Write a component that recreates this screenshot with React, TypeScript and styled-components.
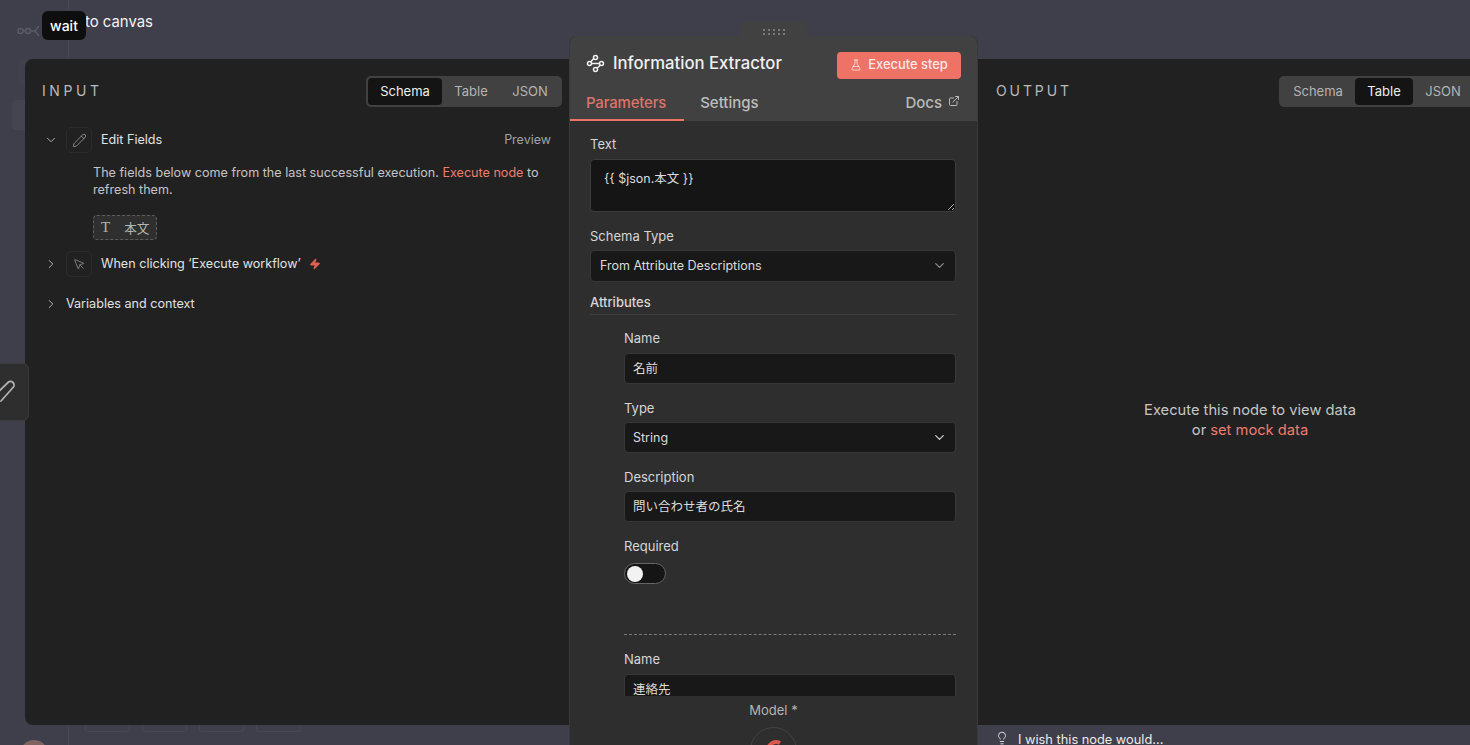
import React from 'react'
import styled, { createGlobalStyle } from 'styled-components'
import {
  ChevronDown,
  ChevronRight,
  ExternalLink,
  FlaskConical,
  Lightbulb,
  MousePointer,
  Pencil,
  Zap,
} from 'lucide-react'

const GlobalStyle = createGlobalStyle`
  html, body {
    margin: 0;
    height: 100%;
    background: #3f3e4b;
  }
  body {
    font-family: Inter, "Noto Sans CJK JP", sans-serif;
    overflow: hidden;
  }
  * {
    box-sizing: border-box;
  }
`

// The whole window: rows follow the handle, the panel tops and the bottom strip
const Stage = styled.div`
  position: relative;
  width: 1470px;
  height: 745px;
  overflow: hidden;
  display: grid;
  grid-template-columns: 25px 544px 409px 544px;
  grid-template-rows: 21px 15px 23px 666px 20px;
`

const BackLink = styled.div`
  grid-column: 1 / 3;
  grid-row: 1 / 4;
  padding: 13px 0 0 46px;
  font-size: 14.9px;
  line-height: 18px;
  font-weight: 400;
  color: #f4f4f4;
`

const BackgroundRail = styled.div`
  position: absolute;
  left: 68px;
  top: 0;
  bottom: 0;
  width: 1px;
  background: #474654;
`

const GhostNode = styled.svg`
  position: absolute;
  left: 16px;
  top: 23px;
`

const GhostSlot = styled.div<{ $top: number; $left: number; $height: number; $tone: string }>`
  position: absolute;
  left: ${p => p.$left}px;
  top: ${p => p.$top}px;
  width: 30px;
  height: ${p => p.$height}px;
  border-radius: 4px;
  background: ${p => p.$tone};
`

const Tooltip = styled.div`
  position: absolute;
  left: 42px;
  top: 11px;
  width: 44px;
  height: 29px;
  z-index: 5;
  border-radius: 6px;
  background: #0e0e0e;
  color: #ffffff;
  font-size: 14px;
  font-weight: 500;
  line-height: 29px;
  text-align: center;
`

const SidePanel = styled.section<{ $side: 'left' | 'right' }>`
  position: relative;
  z-index: 1;
  grid-row: 4;
  grid-column: ${p => (p.$side === 'left' ? 2 : 4)};
  background: #212121;
  border-radius: ${p => (p.$side === 'left' ? '8px 0 0 8px' : '0')};
  display: flex;
  flex-direction: column;
  min-width: 0;
  overflow: hidden;
`

const PanelHead = styled.header<{ $side: 'left' | 'right' }>`
  height: 48px;
  flex: none;
  display: flex;
  align-items: center;
  justify-content: space-between;
  padding: ${p => (p.$side === 'left' ? '16px 7px 0 17px' : '16px 47px 0 18px')};
`

const PanelTitle = styled.h2<{ $spacing: number }>`
  margin: 0;
  font-size: 14px;
  line-height: 20px;
  font-weight: 400;
  letter-spacing: ${p => p.$spacing}px;
  color: #b9b9b9;
`

const SegmentGroup = styled.div`
  display: flex;
  height: 31px;
  padding: 2px;
  border-radius: 5px;
  background: #414141;
  flex: none;
`

const Segment = styled.div<{ $active?: boolean; $width: number }>`
  width: ${p => p.$width}px;
  border-radius: 4px;
  background: ${p => (p.$active ? '#141414' : 'transparent')};
  color: ${p => (p.$active ? '#ededed' : '#b4b4b4')};
  font-size: 13px;
  line-height: 27px;
  text-align: center;
`

const InputBody = styled.div`
  padding: 20px 18px 0 17px;
  display: flex;
  flex-direction: column;
`

const TreeRow = styled.div<{ $marginTop?: number }>`
  display: flex;
  align-items: center;
  height: 26px;
  margin-top: ${p => p.$marginTop ?? 0}px;
  color: #e2e2e2;
  font-size: 12.6px;
  line-height: 18px;
`

const Caret = styled.span`
  width: 24px;
  flex: none;
  display: flex;
  padding-left: 2px;
  color: #c4c4c4;
`

const NodeBadge = styled.span`
  width: 26px;
  height: 26px;
  flex: none;
  display: flex;
  align-items: center;
  justify-content: center;
  margin-right: 9px;
  border: 1px solid #2b2b2b;
  border-radius: 5px;
  color: #a8a8a8;
`

const RowLabel = styled.span`
  flex: 1;
  display: flex;
  align-items: center;
  gap: 8px;
`

const PreviewLabel = styled.span`
  color: #a2a2a2;
  font-size: 12.5px;
`

const Notice = styled.p`
  margin: 11px 0 0 51px;
  font-size: 12.6px;
  line-height: 17px;
  color: #c4c4c4;
`

const Accent = styled.span`
  color: #ee7c70;
`

const FieldChip = styled.div`
  width: 64px;
  height: 25px;
  margin: 17px 0 0 51px;
  display: flex;
  align-items: center;
  gap: 14px;
  padding: 0 0 1px 7px;
  border: 1px dashed #5c5c5c;
  border-radius: 4px;
  background: #2f2f2f;
  color: #b4b4b4;
  font-size: 12.6px;
`

const TypeGlyph = styled.span`
  font-family: "Liberation Serif", serif;
  font-size: 15px;
  line-height: 1;
`

const CenterColumn = styled.div`
  grid-column: 3;
  grid-row: 1 / 6;
  z-index: 2;
  display: flex;
  flex-direction: column;
  min-height: 0;
`

const DragHandle = styled.div`
  flex: none;
  align-self: center;
  width: 67px;
  height: 21px;
  margin-top: 21px;
  margin-bottom: -6px;
  border-radius: 6px 6px 0 0;
  background: #414141;
  display: grid;
  grid-template-columns: repeat(5, 2px);
  grid-auto-rows: 2px;
  justify-content: center;
  align-content: start;
  gap: 2px 3px;
  padding-top: 8px;
`

const DragDot = styled.i`
  background: #8e8e8e;
  border-radius: 50%;
`

const CenterPanel = styled.section`
  flex: 1;
  min-height: 0;
  position: relative;
  display: flex;
  flex-direction: column;
  overflow: hidden;
  border-radius: 8px 8px 0 0;
  border-left: 1px solid #3a3a3a;
  border-right: 1px solid #3a3a3a;
  background: #2e2e2e;
`

const CenterHead = styled.header`
  flex: none;
  height: 85px;
  background: #414141;
  display: flex;
  flex-direction: column;
`

const TitleRow = styled.div`
  height: 56px;
  display: flex;
  align-items: center;
  padding: 0 16px 2px 16px;
`

const NodeTitle = styled.h1`
  flex: 1;
  margin: 0 0 0 8px;
  font-size: 16.7px;
  line-height: 24px;
  font-weight: 500;
  color: #f0f0f0;
`

const ExecuteButton = styled.button`
  width: 124px;
  height: 27px;
  margin-top: 5px;
  padding: 0 0 2px;
  border: 0;
  border-radius: 4px;
  background: #ee7265;
  color: #f9e9e6;
  font: 500 12.9px Inter, sans-serif;
  display: flex;
  align-items: center;
  justify-content: center;
  gap: 6px;
`

const TabRow = styled.nav`
  flex: 1;
  display: flex;
  align-items: stretch;
  padding-right: 17px;
`

const Tab = styled.div<{ $active?: boolean }>`
  padding: 0 ${p => (p.$active ? 18 : 16)}px 0 16px;
  font-size: 15px;
  font-weight: 500;
  line-height: 22px;
  letter-spacing: ${p => (p.$active ? '-0.2px' : '0')};
  color: ${p => (p.$active ? '#dd7469' : '#bdbdbd')};
  border-bottom: 2px solid ${p => (p.$active ? '#ee7265' : 'transparent')};
`

const DocsLink = styled.div`
  margin-left: auto;
  display: flex;
  gap: 6px;
  font-size: 15px;
  line-height: 22px;
  font-weight: 500;
  color: #b9b9b9;
`

const DocsIcon = styled.span`
  display: flex;
  margin-top: 3px;
`

const CenterBody = styled.div`
  flex: 1;
  min-height: 0;
  overflow: hidden;
  padding: 14px 21px 0 20px;
`

const FieldLabel = styled.label<{ $top?: number }>`
  display: block;
  margin-top: ${p => p.$top ?? 0}px;
  margin-bottom: ${p => (p.$top ? 4 : 5)}px;
  font-size: 13px;
  line-height: 19px;
  color: #d6d6d6;
`

const TextArea = styled.textarea`
  display: block;
  width: 100%;
  height: 53px;
  padding: 10px 13px;
  border: 1px solid #3c3c3c;
  border-radius: 4px;
  outline: none;
  resize: vertical;
  background: #151515;
  color: #dcdcdc;
  font: 12.5px/17px Inter, "Noto Sans CJK JP", sans-serif;
`

const TextInput = styled.div<{ $height?: number; $inset?: number; $lift?: number }>`
  height: ${p => p.$height ?? 31}px;
  display: flex;
  align-items: center;
  justify-content: space-between;
  padding: 0 8px ${p => p.$lift ?? 0}px ${p => p.$inset ?? 8}px;
  border: 1px solid #383838;
  border-radius: 4px;
  background: #181818;
  color: #dcdcdc;
  font-size: 12.5px;
`

const SelectChevron = styled.span<{ $muted?: boolean }>`
  display: flex;
  color: ${p => (p.$muted ? '#8c8c8c' : '#cfcfcf')};
`

const SectionTitle = styled.div`
  margin-top: 11px;
  padding-bottom: 3px;
  border-bottom: 1px solid #3d3d3d;
  font-size: 13px;
  line-height: 18px;
  font-weight: 500;
  color: #d6d6d6;
`

const AttributeList = styled.div`
  padding-left: 34px;
  margin-top: 14px;
`

const Toggle = styled.div`
  width: 42px;
  height: 21px;
  margin-top: 7px;
  padding: 1.5px 2px;
  border: 1px solid #666666;
  border-radius: 11px;
  background: #151515;
`

const ToggleKnob = styled.div`
  width: 16px;
  height: 16px;
  border-radius: 50%;
  background: #f2f2f2;
`

const DashedDivider = styled.div`
  margin: 50px 0 15px;
  border-top: 1px dashed #7a7a7a;
`

const CenterFoot = styled.footer`
  flex: none;
  height: 49px;
  background: #2e2e2e;
  display: flex;
  flex-direction: column;
  align-items: center;
  padding-top: 6px;
  overflow: hidden;
`

const FootLabel = styled.div`
  font-size: 13px;
  line-height: 17px;
  color: #b4b4b4;
`

const ModelCircle = styled.div`
  width: 47px;
  height: 47px;
  margin-top: 8px;
  flex: none;
  border: 1px solid #424242;
  border-radius: 50%;
  display: flex;
  justify-content: center;
  padding-top: 10px;
`

const EmptyOutput = styled.div`
  flex: 1;
  display: flex;
  align-items: center;
  justify-content: center;
  padding-top: 8px;
`

const EmptyText = styled.p`
  margin: 0;
  font-size: 14.7px;
  line-height: 20px;
  color: #c6c6c6;
  text-align: center;
`

const WishBar = styled.div`
  grid-column: 4;
  grid-row: 5;
  display: flex;
  align-items: flex-start;
  gap: 9px;
  padding: 6px 0 0 17px;
  font-size: 12.8px;
  line-height: 17px;
  color: #ececec;
`

const BulbIcon = styled.span`
  display: flex;
`

const GhostCards = styled.div`
  grid-column: 1 / 3;
  grid-row: 5;
  display: flex;
  gap: 12px;
  padding-left: 85px;
`

const GhostCard = styled.div`
  width: 45px;
  height: 7px;
  border: 1px solid #474653;
  border-top: 0;
  border-radius: 0 0 3px 3px;
`

const Avatar = styled.div`
  position: absolute;
  left: 20px;
  top: 740px;
  width: 28px;
  height: 28px;
  border-radius: 50%;
  background: #7d6463;
`

const AttachTab = styled.div`
  position: absolute;
  left: -8px;
  top: 363px;
  z-index: 3;
  width: 37px;
  height: 58px;
  border: 1px solid #3a3a3a;
  border-radius: 6px;
  background: #2e2e2e;
  color: #b0b0b0;
  display: flex;
  align-items: center;
  padding-left: 7px;
`

const ExtractorIcon = () => (
  <svg width="19" height="19" viewBox="0 0 19 19" fill="none" stroke="#f0f0f0" strokeWidth="1.5">
    <circle cx="9.5" cy="3.5" r="2" />
    <circle cx="3.5" cy="9.5" r="2" />
    <circle cx="15.5" cy="9.5" r="2" />
    <circle cx="9.5" cy="15.5" r="2" />
    <path d="M7.8 4.6 4.8 7.8M5.5 9.5h8M14.2 11.2l-3.2 3" />
  </svg>
)

const AttachGlyph = () => (
  <svg width="16" height="26" viewBox="0 0 16 26" fill="none" stroke="currentColor" strokeWidth="1.8" strokeLinecap="round">
    <path d="M-4 15 8 3.5A3.5 3.5 0 0 1 13 8.5L1 22" />
  </svg>
)

const ModelSwirl = () => (
  <svg width="24" height="24" viewBox="0 0 24 24" fill="none" stroke="#d9584b" strokeWidth="4">
    <path d="M18 5a8 8 0 1 0 0 14" />
  </svg>
)

const dragDots = Array.from({ length: 10 })

export default function App() {
  return (
    <Stage>
      <GlobalStyle />
      <BackgroundRail />
      <GhostNode width="26" height="16" viewBox="0 0 26 16" fill="none" stroke="#5b5a66" strokeWidth="1.5">
        <circle cx="4.5" cy="8" r="2.5" />
        <circle cx="12" cy="8" r="2.5" />
        <path d="M7 8h2.5M14.5 8H19l4-5M19 8l4 5" />
      </GhostNode>
      <GhostSlot $left={18} $top={60} $height={25} $tone="#41404d" />
      <GhostSlot $left={12} $top={100} $height={30} $tone="#454451" />
      <BackLink>Back to canvas</BackLink>
      <Tooltip>wait</Tooltip>

      <SidePanel $side="left">
        <PanelHead $side="left">
          <PanelTitle $spacing={3.6}>INPUT</PanelTitle>
          <SegmentGroup>
            <Segment $active $width={74}>Schema</Segment>
            <Segment $width={58}>Table</Segment>
            <Segment $width={60}>JSON</Segment>
          </SegmentGroup>
        </PanelHead>
        <InputBody>
          <TreeRow>
            <Caret><ChevronDown size={14} strokeWidth={1.5} /></Caret>
            <NodeBadge><Pencil size={15} strokeWidth={1.2} /></NodeBadge>
            <RowLabel>Edit Fields</RowLabel>
            <PreviewLabel>Preview</PreviewLabel>
          </TreeRow>
          <Notice>
            The fields below come from the last successful execution. <Accent>Execute node</Accent> to refresh them.
          </Notice>
          <FieldChip>
            <TypeGlyph>T</TypeGlyph>
            <span>本文</span>
          </FieldChip>
          <TreeRow $marginTop={11}>
            <Caret><ChevronRight size={14} strokeWidth={1.5} /></Caret>
            <NodeBadge><MousePointer size={13} strokeWidth={1.2} /></NodeBadge>
            <RowLabel>
              When clicking ‘Execute workflow’
              <Zap size={12} color="#e0604f" fill="#e0604f" />
            </RowLabel>
          </TreeRow>
          <TreeRow $marginTop={14}>
            <Caret><ChevronRight size={14} strokeWidth={1.5} /></Caret>
            <RowLabel>Variables and context</RowLabel>
          </TreeRow>
        </InputBody>
      </SidePanel>

      <CenterColumn>
        <DragHandle>
          {dragDots.map((_, i) => <DragDot key={i} />)}
        </DragHandle>
        <CenterPanel>
          <CenterHead>
            <TitleRow>
              <ExtractorIcon />
              <NodeTitle>Information Extractor</NodeTitle>
              <ExecuteButton>
                <FlaskConical size={12} strokeWidth={1.6} />
                Execute step
              </ExecuteButton>
            </TitleRow>
            <TabRow>
              <Tab $active>Parameters</Tab>
              <Tab>Settings</Tab>
              <DocsLink>
                Docs
                <DocsIcon><ExternalLink size={12} /></DocsIcon>
              </DocsLink>
            </TabRow>
          </CenterHead>
          <CenterBody>
            <FieldLabel>Text</FieldLabel>
            <TextArea readOnly defaultValue="{{ $json.本文 }}" />
            <FieldLabel $top={15}>Schema Type</FieldLabel>
            <TextInput $height={32} $inset={9} $lift={2}>
              From Attribute Descriptions
              <SelectChevron $muted><ChevronDown size={15} /></SelectChevron>
            </TextInput>
            <SectionTitle>Attributes</SectionTitle>
            <AttributeList>
              <FieldLabel>Name</FieldLabel>
              <TextInput $lift={2}>名前</TextInput>
              <FieldLabel $top={15}>Type</FieldLabel>
              <TextInput>
                String
                <SelectChevron><ChevronDown size={15} /></SelectChevron>
              </TextInput>
              <FieldLabel $top={15}>Description</FieldLabel>
              <TextInput $lift={2}>問い合わせ者の氏名</TextInput>
              <FieldLabel $top={15}>Required</FieldLabel>
              <Toggle><ToggleKnob /></Toggle>
              <DashedDivider />
              <FieldLabel>Name</FieldLabel>
              <TextInput $lift={2}>連絡先</TextInput>
            </AttributeList>
          </CenterBody>
          <CenterFoot>
            <FootLabel>Model *</FootLabel>
            <ModelCircle><ModelSwirl /></ModelCircle>
          </CenterFoot>
        </CenterPanel>
      </CenterColumn>

      <SidePanel $side="right">
        <PanelHead $side="right">
          <PanelTitle $spacing={2.9}>OUTPUT</PanelTitle>
          <SegmentGroup>
            <Segment $width={74}>Schema</Segment>
            <Segment $active $width={58}>Table</Segment>
            <Segment $width={60}>JSON</Segment>
          </SegmentGroup>
        </PanelHead>
        <EmptyOutput>
          <EmptyText>
            Execute this node to view data<br />
            or <Accent>set mock data</Accent>
          </EmptyText>
        </EmptyOutput>
      </SidePanel>

      <GhostCards>
        <GhostCard />
        <GhostCard />
        <GhostCard />
        <GhostCard />
      </GhostCards>
      <Avatar />
      <WishBar>
        <BulbIcon><Lightbulb size={14} strokeWidth={1.5} /></BulbIcon>
        I wish this node would...
      </WishBar>
      <AttachTab><AttachGlyph /></AttachTab>
    </Stage>
  )
}
